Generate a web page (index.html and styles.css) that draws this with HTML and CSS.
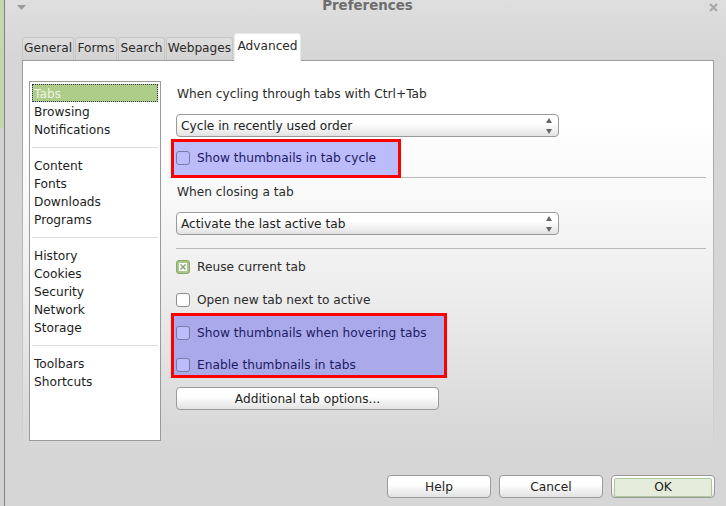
FILE: index.html
```html
<!DOCTYPE html>
<html lang="en">

<head>
    <link rel="stylesheet" href="styles.css">
</head>

<body>
    <div class="desktop-edge"></div>
    <main class="window">
        <header class="titlebar">
            <svg class="menu-arrow" width="9" height="5" viewBox="0 0 9 5"><path d="M0 0H9L4.5 5Z" fill="#9a9a9a"/></svg>
            <span class="title">Preferences</span>
            <svg class="close" width="9" height="9" viewBox="0 0 9 9"><path d="M1 1L8 8M8 1L1 8" stroke="#a8a8a8" stroke-width="2.2"/></svg>
        </header>

        <nav class="tabs">
            <span class="tab tab-general">General</span>
            <span class="tab tab-forms">Forms</span>
            <span class="tab tab-search">Search</span>
            <span class="tab tab-webpages">Webpages</span>
            <span class="tab active">Advanced</span>
        </nav>

        <section class="panel">
            <ul class="sidebar">
                <li class="selected">Tabs</li>
                <li>Browsing</li>
                <li>Notifications</li>
                <li class="divider"></li>
                <li>Content</li>
                <li>Fonts</li>
                <li>Downloads</li>
                <li>Programs</li>
                <li class="divider"></li>
                <li>History</li>
                <li>Cookies</li>
                <li>Security</li>
                <li>Network</li>
                <li>Storage</li>
                <li class="divider"></li>
                <li>Toolbars</li>
                <li>Shortcuts</li>
            </ul>

            <div class="options">
                <div class="label">When cycling through tabs with Ctrl+Tab</div>
                <div class="combo">
                    <span>Cycle in recently used order</span>
                    <svg width="6" height="16" viewBox="0 0 6 16"><path d="M3 0L6 5H0ZM0 11H6L3 16Z" fill="#666"/></svg>
                </div>
                <div class="highlight one">
                    <label class="check"><i class="box"></i>Show thumbnails in tab cycle</label>
                </div>
                <div class="separator first"></div>
                <div class="label closing">When closing a tab</div>
                <div class="combo">
                    <span>Activate the last active tab</span>
                    <svg width="6" height="16" viewBox="0 0 6 16"><path d="M3 0L6 5H0ZM0 11H6L3 16Z" fill="#666"/></svg>
                </div>
                <div class="separator second"></div>
                <label class="check reuse">
                    <i class="box checked">
                        <svg width="8" height="8" viewBox="0 0 8 8"><rect width="8" height="8" fill="#fff"/><path d="M1.5 1.5L6.5 6.5M6.5 1.5L1.5 6.5" stroke="#8aa878" stroke-width="1.6"/></svg>
                    </i>Reuse current tab
                </label>
                <label class="check open-new"><i class="box"></i>Open new tab next to active</label>
                <div class="highlight two">
                    <label class="check"><i class="box"></i>Show thumbnails when hovering tabs</label>
                    <label class="check"><i class="box"></i>Enable thumbnails in tabs</label>
                </div>
                <button class="btn additional">Additional tab options...</button>
            </div>
        </section>

        <footer class="actions">
            <button class="btn">Help</button>
            <button class="btn">Cancel</button>
            <button class="btn default"><span>OK</span></button>
        </footer>
    </main>
</body>

</html>
```

FILE: styles.css
```css
html,
body {
    margin: 0;
    height: 506px;
    overflow: hidden;
}

body {
    display: flex;
    background-color: #d6d6d6;
    font-family: "DejaVu Sans", sans-serif;
    font-size: 12.2px;
    color: #2a2a2a;
}

.desktop-edge {
    width: 4px;
    background: linear-gradient(#c4d8ae 0, #c4d8ae 128px, #d2d2d2 128px);
}

.window {
    flex: 1;
    border-left: 1px solid #808080;
    background: linear-gradient(#dedede, #d6d6d6 60px);
}

.titlebar {
    height: 12px;
    position: relative;
    text-align: center;
    padding-left: 4px;
}

.title {
    display: block;
    font-weight: bold;
    font-size: 13.4px;
    line-height: 12px;
    color: #6e6e6e;
}

.menu-arrow {
    position: absolute;
    left: 12px;
    top: 5px;
}

.close {
    position: absolute;
    left: 704px;
    top: 3px;
}

.tabs {
    display: flex;
    align-items: flex-end;
    height: 48px;
    margin-left: 17px;
    position: relative;
    z-index: 1;
}

.tab {
    box-sizing: border-box;
    height: 23px;
    margin-right: 1px;
    line-height: 20px;
    text-align: center;
    background: linear-gradient(#dedede, #d2d2d2);
    border: 1px solid #c6c6c6;
    border-bottom: none;
    border-radius: 3px 3px 0 0;
    white-space: nowrap;
}

.tab-general { width: 52px; }
.tab-forms { width: 42px; }
.tab-search { width: 47px; }
.tab-webpages { width: 67px; }

.tab.active {
    width: 67px;
    height: 28px;
    margin-bottom: -1px;
    padding-top: 2px;
    line-height: 21px;
    background-color: #fff;
    background-image: none;
    border-color: #e8e8e8;
}

.panel {
    box-sizing: border-box;
    display: flex;
    width: 692px;
    height: 402px;
    margin-left: 17px;
    border: 1px solid;
    border-image: linear-gradient(#9c9c9c, #d6d6d6) 1;
    border-bottom: none;
    background: linear-gradient(#fff, #fff 60px, #f8f8f8 140px, #ececec 240px, #dcdcdc 340px, #d6d6d6 390px);
}

.sidebar {
    box-sizing: border-box;
    width: 132px;
    height: 360px;
    margin: 20px 0 0 6px;
    padding: 2px 2px;
    list-style: none;
    background-color: #fff;
    border: 1px solid #9a9a9a;
    color: #1c1c1c;
}

.sidebar li {
    box-sizing: border-box;
    height: 18px;
    line-height: 20px;
    padding-left: 2px;
    white-space: nowrap;
}

.sidebar .selected {
    border: 1px dotted #33335a;
    padding-left: 1px;
    line-height: 18px;
    background-color: #aecd88;
    color: #eef5e4;
}

.sidebar .divider {
    position: relative;
}

.sidebar .divider::after {
    content: "";
    position: absolute;
    left: 0;
    right: 0;
    top: 9px;
    height: 1px;
    background-color: #dcdcdc;
}

.options {
    flex: 1;
    padding: 23px 7px 0 15px;
}

.label {
    height: 18px;
    line-height: 20px;
    padding-left: 1px;
}

.closing {
    margin-top: 4px;
}

.combo {
    box-sizing: border-box;
    display: flex;
    justify-content: space-between;
    align-items: center;
    width: 383px;
    height: 23px;
    margin-top: 12px;
    padding: 0 6px 0 4px;
    background: linear-gradient(#fff 40%, #e2e2e2);
    border: 1px solid #9a9a9a;
    border-radius: 4px;
    color: #222;
}

.highlight {
    position: relative;
    z-index: 1;
    box-sizing: border-box;
    width: fit-content;
    margin-left: -5px;
    padding-left: 2px;
    border: 3px solid #ff0000;
    color: #201a66;
}

.highlight.one {
    width: 230px;
    height: 39px;
    margin-top: 2px;
    padding-top: 7px;
    background-color: #bcbcfa;
}

.highlight.two {
    display: flex;
    flex-direction: column;
    gap: 14px;
    width: 276px;
    height: 65px;
    margin-top: 4px;
    padding-top: 8px;
    background-color: #aaaaea;
}

.check {
    display: flex;
    align-items: center;
    height: 18px;
    line-height: 18px;
}

.box {
    box-sizing: border-box;
    display: flex;
    align-items: center;
    justify-content: center;
    width: 14px;
    height: 14px;
    margin-right: 7px;
    background-color: #fff;
    border: 1px solid #8e8e8e;
    border-radius: 3px;
}

.highlight .box {
    background-color: #bcbcfa;
    border-color: #7a7aa8;
}

.box.checked {
    background-color: #a8c688;
    border-color: #86a868;
}

.separator {
    height: 1px;
    background-color: #b8b8b8;
}

.separator.first {
    margin-top: -1px;
}

.separator.second {
    margin-top: 13px;
}

.reuse {
    margin-top: 9px;
}

.open-new {
    margin-top: 15px;
}

.btn {
    box-sizing: border-box;
    height: 23px;
    padding: 0;
    font: inherit;
    color: #222;
    background: linear-gradient(#fff 40%, #e2e2e2);
    border: 1px solid #9a9a9a;
    border-radius: 4px;
}

.additional {
    display: block;
    width: 263px;
    margin-top: 9px;
}

.actions {
    display: flex;
    justify-content: flex-end;
    gap: 8px;
    margin-top: 13px;
    padding-right: 11px;
}

.actions .btn {
    width: 104px;
}

.actions .default {
    padding: 2px;
}

.default span {
    display: block;
    height: 17px;
    line-height: 16px;
    background-color: #e6ecdc;
    border: 1px solid #b0c898;
    border-radius: 2px;
}
```
